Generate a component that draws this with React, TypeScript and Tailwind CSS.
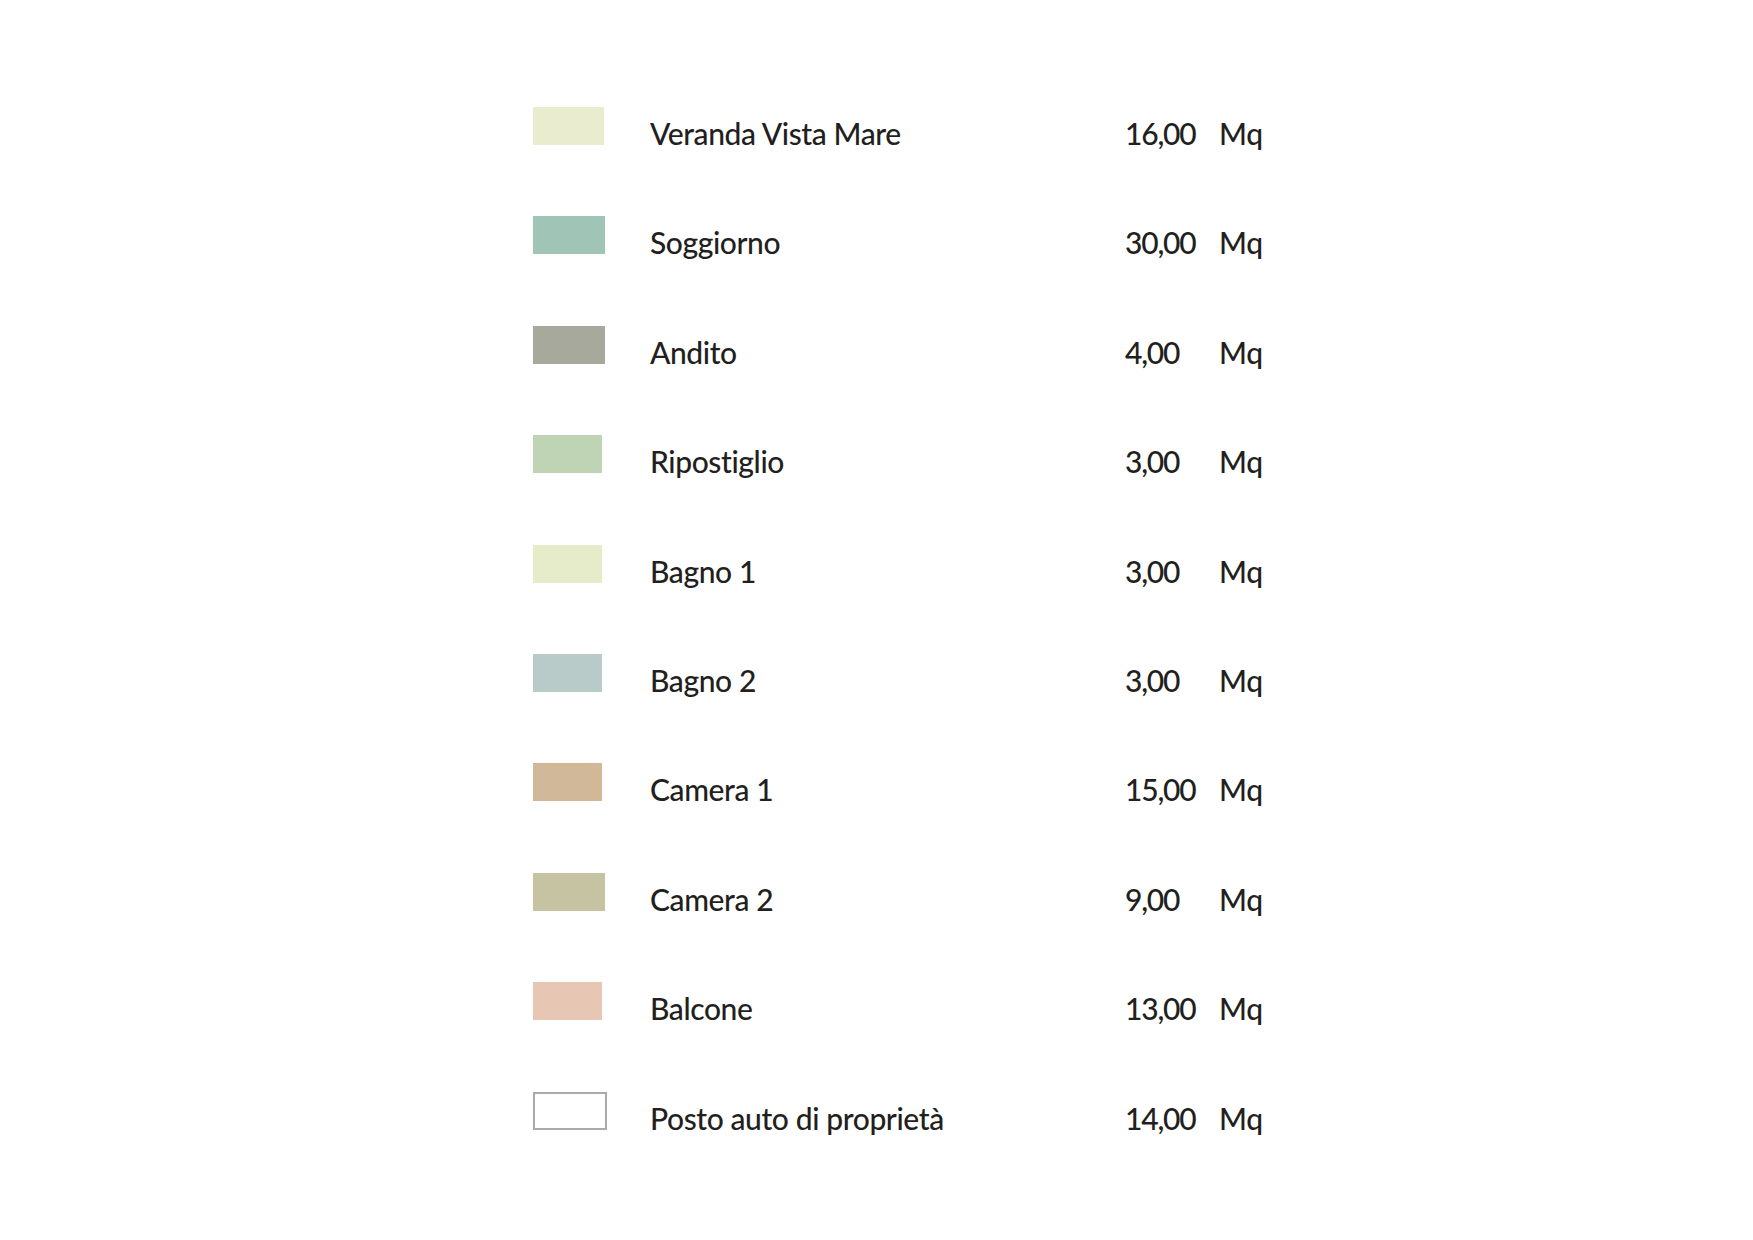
const rooms = [
  { name: "Veranda Vista Mare", area: "16,00", color: "bg-[#e9ecce]", w: "w-[71px]" },
  { name: "Soggiorno", area: "30,00", color: "bg-[#a0c4b6]", w: "w-[72px]" },
  { name: "Andito", area: "4,00", color: "bg-[#a6a99b]", w: "w-[72px]" },
  { name: "Ripostiglio", area: "3,00", color: "bg-[#bfd3b5]", w: "w-[69px]" },
  { name: "Bagno 1", area: "3,00", color: "bg-[#e6ecca]", w: "w-[69px]" },
  { name: "Bagno 2", area: "3,00", color: "bg-[#b8cbc8]", w: "w-[69px]" },
  { name: "Camera 1", area: "15,00", color: "bg-[#d1b898]", w: "w-[69px]" },
  { name: "Camera 2", area: "9,00", color: "bg-[#c6c3a3]", w: "w-[72px]" },
  { name: "Balcone", area: "13,00", color: "bg-[#e8c6b4]", w: "w-[69px]" },
  { name: "Posto auto di proprietà", area: "14,00", color: "bg-white border-2 border-[#aaaaaa]", w: "w-[74px]" },
];

export default function App() {
  return (
    <div className="min-h-[1240px] w-full bg-white pt-[107px] pl-[533px] text-[#231f20] font-['Lato','Liberation_Sans',sans-serif] font-medium text-[30px]">
      {rooms.map((room) => (
        <div key={room.name} className="flex h-[109.4px] items-baseline">
          <div className="w-[117px] shrink-0">
            <div className={`${room.w} h-[38px] ${room.color}`} />
          </div>
          <span className="w-[475px] shrink-0 tracking-[-0.4px]">{room.name}</span>
          <span className="w-[94px] shrink-0 tracking-[-1.2px]">{room.area}</span>
          <span className="tracking-[-0.4px]">Mq</span>
        </div>
      ))}
    </div>
  );
}
